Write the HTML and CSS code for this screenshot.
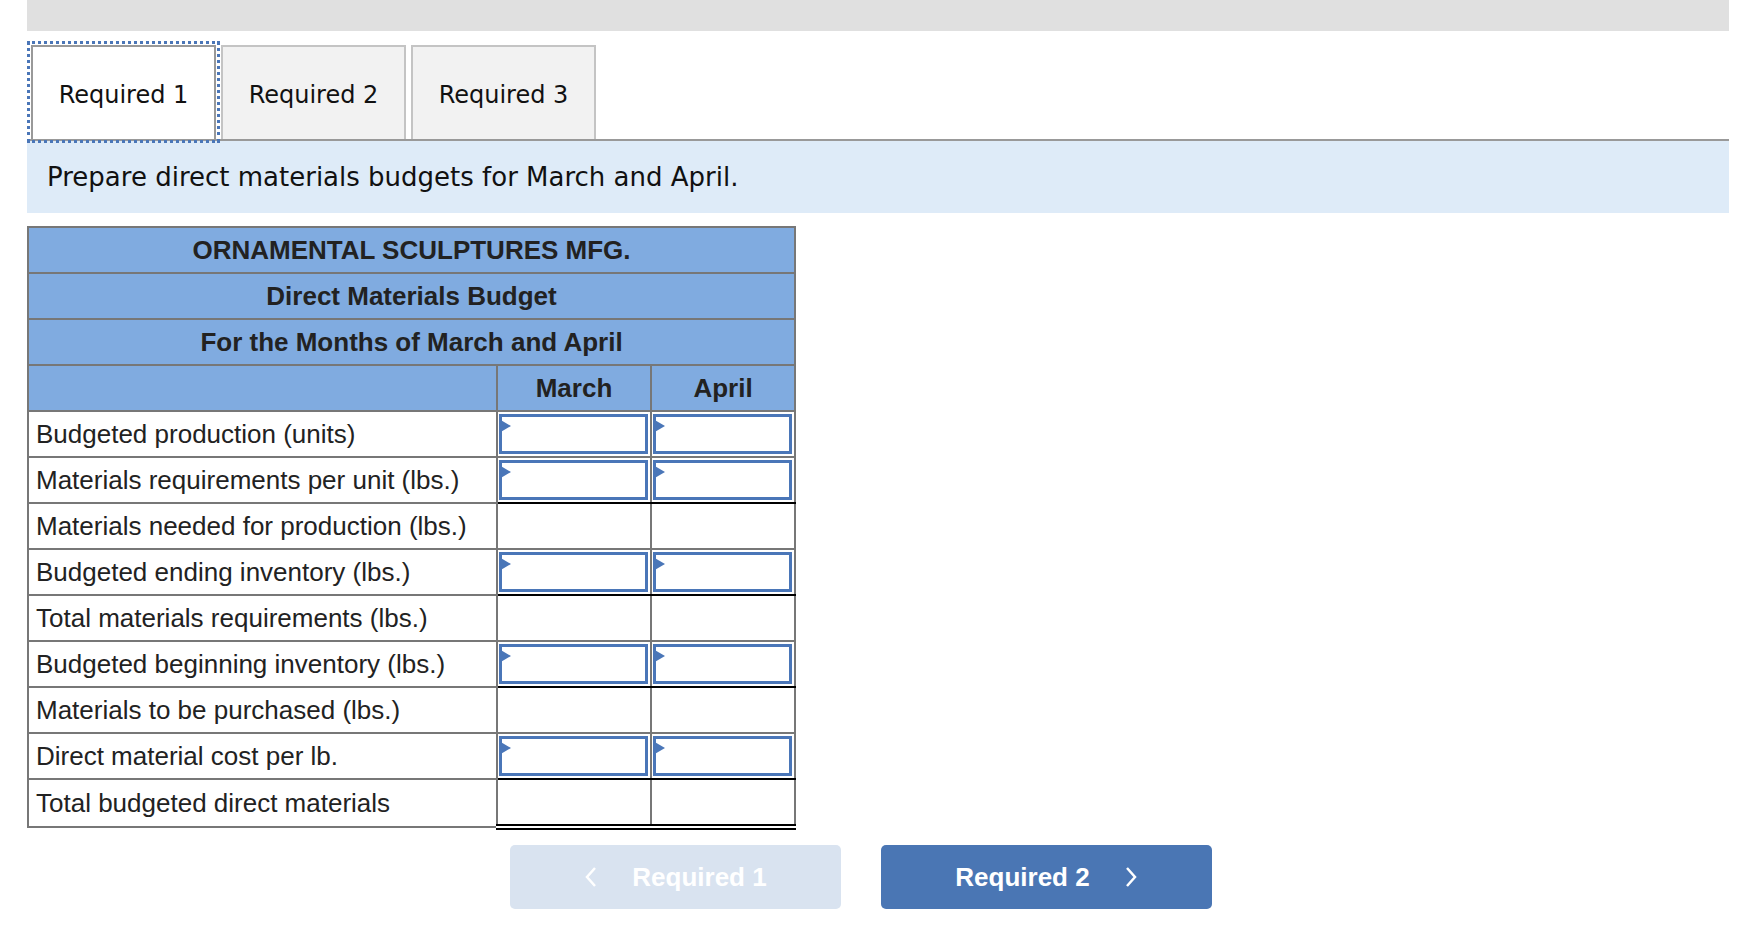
FILE: index.html
```html
<!DOCTYPE html>
<html lang="en">
<head>
    <meta charset="UTF-8">
    <meta name="viewport" content="width=device-width, initial-scale=1.0">
    <title>Direct Materials Budget</title>
    <link rel="stylesheet" href="styles.css">
</head>
<body>

<div class="page">
    <div class="topbar"></div>

    <div class="tabs">
        <div class="tab active">Required 1</div>
        <div class="tab">Required 2</div>
        <div class="tab">Required 3</div>
    </div>

    <div class="prompt">Prepare direct materials budgets for March and April.</div>

    <table class="budget">
        <colgroup>
            <col class="col-label">
            <col class="col-march">
            <col class="col-april">
        </colgroup>
        <tr class="head"><th colspan="3">ORNAMENTAL SCULPTURES MFG.</th></tr>
        <tr class="head"><th colspan="3">Direct Materials Budget</th></tr>
        <tr class="head"><th colspan="3">For the Months of March and April</th></tr>
        <tr class="head"><th></th><th>March</th><th>April</th></tr>

        <tr>
            <td class="label">Budgeted production (units)</td>
            <td class="entry"><div class="field"></div></td>
            <td class="entry"><div class="field"></div></td>
        </tr>
        <tr>
            <td class="label">Materials requirements per unit (lbs.)</td>
            <td class="entry under"><div class="field"></div></td>
            <td class="entry under"><div class="field"></div></td>
        </tr>
        <tr>
            <td class="label">Materials needed for production (lbs.)</td>
            <td class="calc total"></td>
            <td class="calc total"></td>
        </tr>
        <tr>
            <td class="label">Budgeted ending inventory (lbs.)</td>
            <td class="entry under"><div class="field"></div></td>
            <td class="entry under"><div class="field"></div></td>
        </tr>
        <tr>
            <td class="label">Total materials requirements (lbs.)</td>
            <td class="calc total"></td>
            <td class="calc total"></td>
        </tr>
        <tr>
            <td class="label">Budgeted beginning inventory (lbs.)</td>
            <td class="entry under"><div class="field"></div></td>
            <td class="entry under"><div class="field"></div></td>
        </tr>
        <tr>
            <td class="label">Materials to be purchased (lbs.)</td>
            <td class="calc total"></td>
            <td class="calc total"></td>
        </tr>
        <tr>
            <td class="label">Direct material cost per lb.</td>
            <td class="entry under"><div class="field"></div></td>
            <td class="entry under"><div class="field"></div></td>
        </tr>
        <tr>
            <td class="label">Total budgeted direct materials</td>
            <td class="calc total grand"></td>
            <td class="calc total grand"></td>
        </tr>
    </table>

    <div class="nav">
        <button class="nav-btn prev" disabled>
            <svg width="14" height="22" viewBox="0 0 14 22"><polyline points="11,2 3,11 11,20" fill="none" stroke="#fff" stroke-width="2.5"/></svg>
            <span>Required 1</span>
        </button>
        <button class="nav-btn next">
            <span>Required 2</span>
            <svg width="14" height="22" viewBox="0 0 14 22"><polyline points="3,2 11,11 3,20" fill="none" stroke="#fff" stroke-width="2.5"/></svg>
        </button>
    </div>
</div>

</body>
</html>
```

FILE: styles.css
```css
body {
    margin: 0;
    padding: 0;
    background: #fff;
    font-family: "Liberation Sans", Arial, sans-serif;
    color: #222;
}

.page {
    margin-left: 27px;
    width: 1702px;
}

.topbar {
    height: 31px;
    background: #e0e0e0;
}

/* tabs */
.tabs {
    display: flex;
    align-items: flex-end;
    gap: 5px;
    margin-top: 14px;
    padding-left: 4px;
    border-bottom: 2px solid #999;
}

.tab {
    box-sizing: border-box;
    width: 185px;
    height: 94px;
    padding-top: 4px;
    display: flex;
    align-items: center;
    justify-content: center;
    background: #f2f2f2;
    border: 2px solid #c4c4c4;
    border-bottom: none;
    font-family: "DejaVu Sans", Verdana, sans-serif;
    font-size: 24px;
    color: #111;
}

.tab.active {
    background: #fff;
    border-color: #999;
    outline: 3px dotted #4a76b8;
    outline-offset: 1px;
}

.prompt {
    height: 72px;
    display: flex;
    align-items: center;
    padding-left: 20px;
    background: #deebf8;
    font-family: "DejaVu Sans", Verdana, sans-serif;
    font-size: 26px;
    color: #111;
    margin-bottom: 13px;
}

/* budget table */
.budget {
    border-collapse: collapse;
    border: 2px solid #777;
    font-size: 26px;
}

.col-label { width: 469px; }
.col-march { width: 154px; }
.col-april { width: 144px; }

.budget th,
.budget td {
    border: 2px solid #777;
    height: 44px;
    padding: 0;
}

.budget th {
    background: #80abe0;
    font-weight: bold;
    text-align: center;
    color: #222;
}

.budget td.label {
    padding-left: 7px;
    white-space: nowrap;
}

.budget td.entry {
    height: 40px;
    padding: 2px 2px 2px 1px;
}

.field {
    position: relative;
    box-sizing: border-box;
    height: 40px;
    border: 3px solid #4a76b8;
    background: #fff;
}

.field::before {
    content: "";
    position: absolute;
    top: 2px;
    left: -3px;
    border-top: 7px solid transparent;
    border-bottom: 7px solid transparent;
    border-left: 12px solid #4a76b8;
}

.budget td.under {
    border-bottom: 2px solid #000;
}

.budget td.total {
    border-top: 2px solid #000;
}

.budget td.grand {
    border-bottom: 6px double #000;
}

/* navigation */
.nav {
    display: flex;
    gap: 40px;
    margin: 15px 0 0 483px;
}

.nav-btn {
    width: 331px;
    height: 64px;
    display: flex;
    align-items: center;
    justify-content: center;
    gap: 34px;
    border: none;
    border-radius: 5px;
    font-family: "Liberation Sans", Arial, sans-serif;
    font-weight: bold;
    font-size: 26px;
    color: #fff;
    cursor: pointer;
}

.nav-btn.prev {
    background: #d9e3f0;
    cursor: default;
}

.nav-btn.next {
    background: #4a76b4;
}
```
